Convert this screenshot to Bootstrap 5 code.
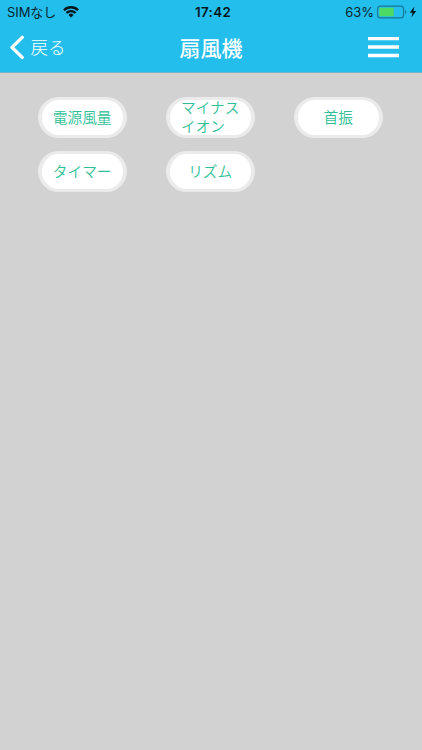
<!DOCTYPE html>
<html lang="ja">
<head>
<meta charset="utf-8">
<meta name="viewport" content="width=device-width, initial-scale=1">
<title>扇風機</title>
<link href="https://cdn.jsdelivr.net/npm/bootstrap@5.3.0/dist/css/bootstrap.min.css" rel="stylesheet">
<style>
body{background:#d2d2d2;font-family:Inter,"Noto Sans CJK JP",sans-serif;min-height:100vh;overflow:hidden}
.top-area{background:#24beed;height:73px;border-bottom:1px solid #73b5ca}
.status-line{display:grid;grid-template-columns:1fr auto 1fr;height:24px;padding:0 5px 0 7px;font-size:13px;line-height:24px;color:#06242e}
.carrier{letter-spacing:-.1px}
.wifi{margin-left:7px}
.battery{margin-left:3px}
.clock{font-weight:600;color:#04161c;font-size:13.3px;letter-spacing:.4px;padding-left:2px}
.title-line{display:grid;grid-template-columns:1fr auto 1fr;height:48px;padding:0 23px 0 9px;color:#fff}
.back-label{font-size:17.5px;line-height:46px;font-weight:300;font-family:"Noto Sans CJK JP",sans-serif;margin-left:5.5px;padding-bottom:2px}
.screen-title{font-size:21px;line-height:46px;font-weight:500;margin:0;font-family:"Noto Sans CJK JP",sans-serif;transform:translateX(7px)}
.remote-keys{display:grid;grid-template-columns:repeat(3,89px);column-gap:39px;row-gap:13px;padding:24px 0 0 37.7px}
.remote-key,.remote-key:hover{height:41px;border:solid #ebebeb;border-width:3px 4px;background:#fff;color:#2fbf97;font-family:"Noto Sans CJK JP",sans-serif;font-size:14.7px;line-height:19px;font-weight:350}
.remote-key > span{display:block;margin-top:-2px}
.remote-key > .two-line{margin-top:-3px}
</style>
<script defer src="https://cdn.jsdelivr.net/npm/bootstrap@5.3.0/dist/js/bootstrap.bundle.min.js"></script>
</head>
<body>
<header class="top-area">
  <div class="status-line">
    <div class="d-flex align-items-center"><span class="carrier">SIMなし</span>
      <svg class="wifi" width="16" height="12" viewBox="0 0 16 12" fill="none" stroke="#04161c" stroke-width="2.3"><path d="M.9 4.2a10 10 0 0 1 14.2 0M3.4 7a6.5 6.5 0 0 1 9.2 0"/><path d="M8 11.4 5.5 8.9a3.5 3.5 0 0 1 5 0z" fill="#04161c" stroke="none"/></svg>
    </div>
    <span class="clock">17:42</span>
    <div class="d-flex align-items-center justify-content-end"><span>63%</span>
      <svg class="battery" width="40" height="14" viewBox="0 0 40 14"><rect x=".6" y="1.1" width="26" height="11.8" rx="3" fill="none" stroke="#167892" stroke-width="1.1"/><rect x="2.3" y="2.8" width="14.5" height="8.4" rx="1" fill="#4cd964"/><path d="M28 5c1.7.6 1.7 3.4 0 4z" fill="#167892"/><path d="M37.4 1.6 32.8 7.8h2.8l-1.2 4.6 4.8-6.3h-2.8z" fill="#04161c"/></svg>
    </div>
  </div>
  <div class="title-line">
    <a class="d-flex align-items-center text-white text-decoration-none" href="#">
      <svg width="16" height="26" viewBox="0 0 16 26" fill="none" stroke="#fff" stroke-width="3.4" stroke-linecap="round" stroke-linejoin="round"><path d="M13.2 2.4 3 12.4 13.2 22.4"/></svg>
      <span class="back-label">戻る</span>
    </a>
    <h1 class="screen-title">扇風機</h1>
    <button class="btn p-0 border-0 d-flex align-items-center justify-content-end" type="button" aria-label="メニュー">
      <svg width="31" height="22" viewBox="0 0 31 22" fill="#fff"><path d="M0 0h31v3.3H0zM0 8.3h31v3.4H0zM0 16.8h31v3.5H0z"/></svg>
    </button>
  </div>
</header>
<main class="remote-keys">
  <button class="btn remote-key rounded-pill p-0" type="button"><span>電源風量</span></button>
  <button class="btn remote-key rounded-pill p-0 d-flex align-items-center justify-content-center text-start" type="button"><span class="two-line">マイナス<br>イオン</span></button>
  <button class="btn remote-key rounded-pill p-0" type="button"><span>首振</span></button>
  <button class="btn remote-key rounded-pill p-0" type="button"><span>タイマー</span></button>
  <button class="btn remote-key rounded-pill p-0" type="button"><span>リズム</span></button>
</main>
</body>
</html>
